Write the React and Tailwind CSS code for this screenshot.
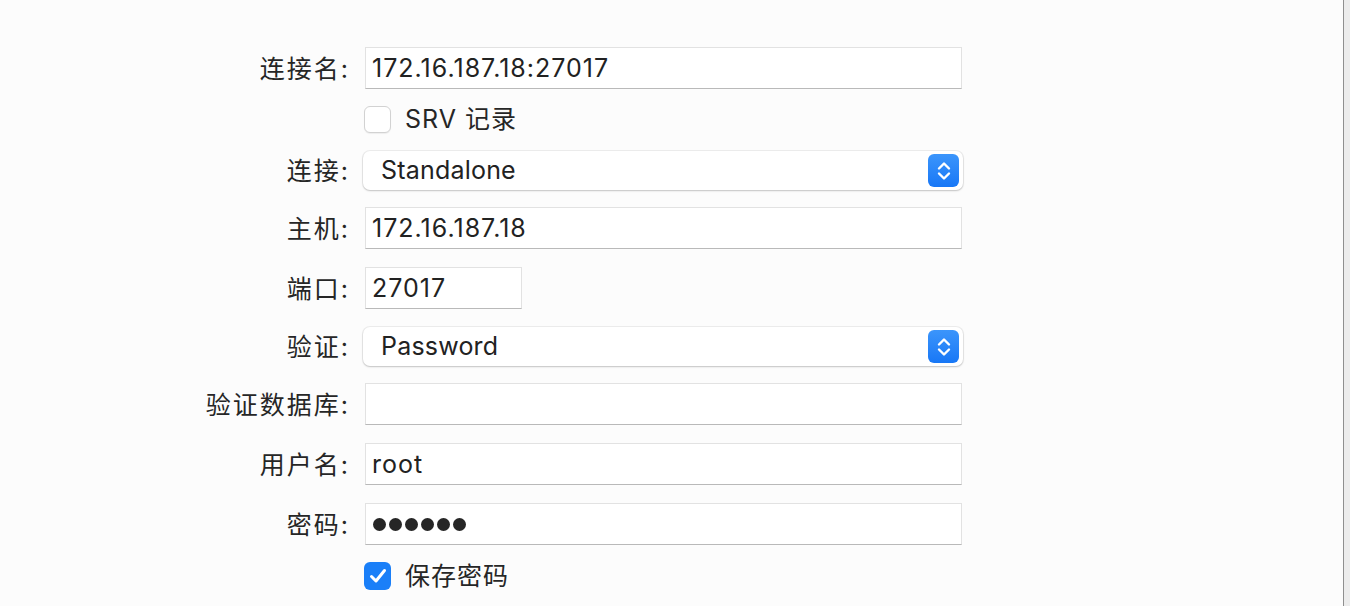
import React from "react";

const font = { fontFamily: 'Inter, "Noto Sans CJK SC", sans-serif' };

function Label({ text }) {
  return (
    <div className="w-[348px] shrink-0 flex justify-end text-[25px] text-[#262626] leading-none pt-[2px]">
      <span className="tracking-[2px]">{text}</span>
      <span>:</span>
    </div>
  );
}

function TextInput({ value, width = "w-[597px]", children }) {
  return (
    <div
      className={`ml-[17px] ${width} h-[42px] bg-white border border-[#e2e2e2] border-b-[#b9b9b9] flex items-center pl-[6px] pt-[1px] text-[25px] tracking-[1px] text-[#222] leading-none`}
    >
      {children ?? value}
    </div>
  );
}

function Select({ value }) {
  return (
    <div className="ml-[15px] w-[600px] h-[39px] bg-white rounded-[7px] shadow-[0_0_0_1px_rgba(0,0,0,0.06),0_1px_2px_rgba(0,0,0,0.18)] flex items-center justify-between pl-[18px] pr-[4px]">
      <span className="text-[25px] tracking-[0.2px] text-[#222] leading-none">{value}</span>
      <div className="w-[31px] h-[33px] rounded-[6px] bg-gradient-to-b from-[#3b95fb] to-[#1777f6] flex items-center justify-center">
        <svg width="18" height="24" viewBox="0 0 18 24" fill="none">
          <path d="M4 9.5 L9 4.5 L14 9.5" stroke="white" strokeWidth="2.4" strokeLinecap="round" strokeLinejoin="round" />
          <path d="M4 14.5 L9 19.5 L14 14.5" stroke="white" strokeWidth="2.4" strokeLinecap="round" strokeLinejoin="round" />
        </svg>
      </div>
    </div>
  );
}

function Checkbox({ checked, label }) {
  return (
    <div className="flex items-center ml-[364px]">
      {checked ? (
        <div className="w-[27px] h-[28px] rounded-[6px] bg-[#1a7ff8] flex items-center justify-center">
          <svg width="18" height="16" viewBox="0 0 18 16" fill="none">
            <path d="M2.5 8.5 L7 13 L15.5 2.5" stroke="white" strokeWidth="3" strokeLinecap="round" strokeLinejoin="round" />
          </svg>
        </div>
      ) : (
        <div className="w-[27px] h-[27px] rounded-[6px] bg-white border border-[#d2d2d2] shadow-[0_1px_1px_rgba(0,0,0,0.06)]" />
      )}
      <span className="ml-[14px] text-[25px] tracking-[1px] text-[#262626] leading-none">{label}</span>
    </div>
  );
}

function Row({ label, children, className = "" }) {
  return (
    <div className={`flex items-center ${className}`}>
      <Label text={label} />
      {children}
    </div>
  );
}

export default function App() {
  return (
    <div className="w-[1350px] h-[606px] flex bg-[#fcfcfc] overflow-hidden" style={font}>
      <div className="flex-1 flex flex-col pt-[47px]">
        <Row label="连接名">
          <TextInput value="172.16.187.18:27017" />
        </Row>

        <div className="mt-[17px]">
          <Checkbox label="SRV 记录" />
        </div>

        <Row label="连接" className="mt-[18px]">
          <Select value="Standalone" />
        </Row>

        <Row label="主机" className="mt-[17px]">
          <TextInput value="172.16.187.18" />
        </Row>

        <Row label="端口" className="mt-[18px]">
          <TextInput value="27017" width="w-[157px]" />
        </Row>

        <Row label="验证" className="mt-[18px]">
          <Select value="Password" />
        </Row>

        <Row label="验证数据库" className="mt-[17px]">
          <TextInput value="" />
        </Row>

        <Row label="用户名" className="mt-[18px]">
          <TextInput value="root" />
        </Row>

        <Row label="密码" className="mt-[18px]">
          <TextInput>
            <div className="flex gap-[3px] ml-[1px]">
              {[0, 1, 2, 3, 4, 5].map((i) => (
                <span key={i} className="block w-[13px] h-[13px] rounded-full bg-[#262626]" />
              ))}
            </div>
          </TextInput>
        </Row>

        <div className="mt-[17px]">
          <Checkbox checked label="保存密码" />
        </div>
      </div>

      {/* scrollbar edge */}
      <div className="w-[7px] h-full border-l border-[#8f8f8f] bg-[#ececec]" />
    </div>
  );
}
